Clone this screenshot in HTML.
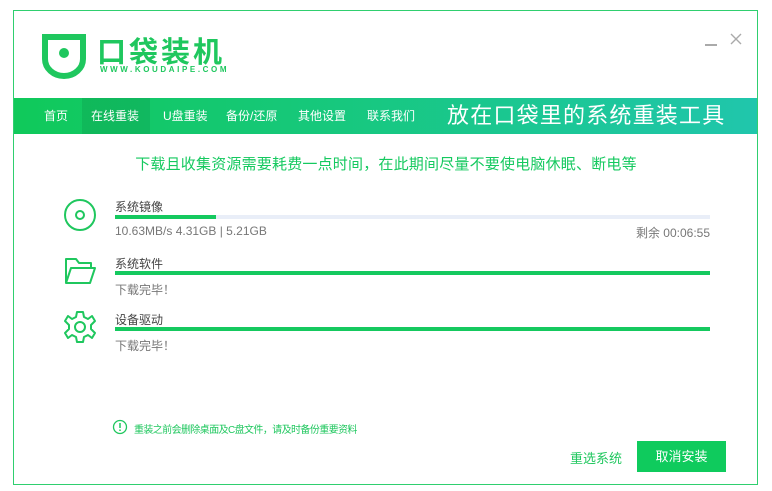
<!DOCTYPE html>
<html><head><meta charset="utf-8"><style>
*{margin:0;padding:0;box-sizing:border-box}
body{width:772px;height:491px;background:#fff;position:relative;overflow:hidden;font-family:"Liberation Sans","Noto Sans CJK SC",sans-serif}
.a{position:absolute;white-space:nowrap}
.win{position:absolute;left:13px;top:10px;width:745px;height:475px;border:1px solid #2fcf6f}
.nav{position:absolute;left:14px;top:98px;width:743px;height:36px;background:linear-gradient(90deg,#10c95a,#20c6ac)}
.nav span{position:absolute;top:0;line-height:36px;color:#fff;font-size:12px}
.lbl{font-size:12px;color:#444}
.bar{position:absolute;left:115px;width:595px;height:4px;background:#e9eef8}
.bar i{position:absolute;left:0;top:0;height:4px;background:#15c95f}
.sub{font-size:12px;color:#777}
</style></head><body>
<div class="win"></div>
<svg class="a" style="left:41px;top:33px" width="46" height="46" viewBox="0 0 46 46"><path d="M4 4 H42 V26 A19 17 0 0 1 4 26 Z" fill="none" stroke="#1fc75e" stroke-width="6"/><circle cx="23" cy="20" r="5" fill="#1fc75e"/></svg>
<div class="a" style="left:97px;top:29px;font-size:29px;font-weight:bold;color:#1fc75e;letter-spacing:3px">口袋装机</div>
<div class="a" style="left:100px;top:65px;font-size:8px;font-weight:bold;color:#1fc75e;letter-spacing:2.6px">WWW.KOUDAIPE.COM</div>
<div class="a" style="left:705px;top:44px;width:12px;height:1.5px;background:#aaa"></div>
<svg class="a" style="left:730px;top:33px" width="12" height="12"><path d="M1 1 L11 11 M11 1 L1 11" stroke="#aaa" stroke-width="1.4"/></svg>
<div class="nav">
<div style="position:absolute;left:68px;top:0;width:68px;height:36px;background:rgba(0,0,0,0.08)"></div>
<span style="left:30px">首页</span>
<span style="left:77px">在线重装</span>
<span style="left:149px">U盘重装</span>
<span style="left:212px">备份/还原</span>
<span style="left:284px">其他设置</span>
<span style="left:353px">联系我们</span>
<span style="left:433px;font-size:22px;letter-spacing:1.2px">放在口袋里的系统重装工具</span>
</div>
<div class="a" style="left:0;width:772px;text-align:center;top:153px;font-size:15px;color:#15c95f;letter-spacing:0.2px">下载且收集资源需要耗费一点时间，在此期间尽量不要使电脑休眠、断电等</div>
<svg class="a" style="left:62px;top:197px" width="36" height="36"><circle cx="18" cy="18" r="15" fill="none" stroke="#1fc75e" stroke-width="2"/><circle cx="18" cy="18" r="4" fill="none" stroke="#1fc75e" stroke-width="2"/></svg>
<div class="a lbl" style="left:115px;top:198px">系统镜像</div>
<div class="bar" style="top:215px"><i style="width:101px"></i></div>
<div class="a sub" style="left:115px;top:224px">10.63MB/s 4.31GB | 5.21GB</div>
<div class="a sub" style="left:630px;top:224px;width:80px;text-align:right">剩余 00:06:55</div>
<svg class="a" style="left:64px;top:256px" width="32" height="30"><path d="M2 27 V3 H12 L15 7 H27 V12 M2 27 L7 12 H31 L26 27 Z" fill="none" stroke="#1fc75e" stroke-width="2" stroke-linejoin="round"/></svg>
<div class="a lbl" style="left:115px;top:255px">系统软件</div>
<div class="bar" style="top:271px"><i style="width:595px"></i></div>
<div class="a sub" style="left:115px;top:281px">下载完毕！</div>
<svg class="a" style="left:63px;top:310px" width="34" height="34" viewBox="0 0 34 34"><path d="M14 2 H20 L21 7 L25 9 L29 6 L32 11 L28 15 V19 L32 23 L29 28 L25 25 L21 27 L20 32 H14 L13 27 L9 25 L5 28 L2 23 L6 19 V15 L2 11 L5 6 L9 9 L13 7 Z" fill="none" stroke="#1fc75e" stroke-width="2" stroke-linejoin="round"/><circle cx="17" cy="17" r="5" fill="none" stroke="#1fc75e" stroke-width="2"/></svg>
<div class="a lbl" style="left:115px;top:311px">设备驱动</div>
<div class="bar" style="top:327px"><i style="width:595px"></i></div>
<div class="a sub" style="left:115px;top:337px">下载完毕！</div>
<svg class="a" style="left:112px;top:419px" width="16" height="16"><circle cx="8" cy="8" r="6.5" fill="none" stroke="#1fc75e" stroke-width="1.3"/><path d="M8 4 V9 M8 10.5 V12" stroke="#1fc75e" stroke-width="1.5"/></svg>
<div class="a" style="left:134px;top:421px;font-size:10px;letter-spacing:-0.6px;color:#1fc75e">重装之前会删除桌面及C盘文件，请及时备份重要资料</div>
<div class="a" style="left:570px;top:448px;font-size:13px;color:#1fc75e">重选系统</div>
<div class="a" style="left:637px;top:441px;width:89px;height:31px;background:#0fcb5d;color:#fff;font-size:13px;text-align:center;line-height:31px">取消安装</div>
</body></html>
